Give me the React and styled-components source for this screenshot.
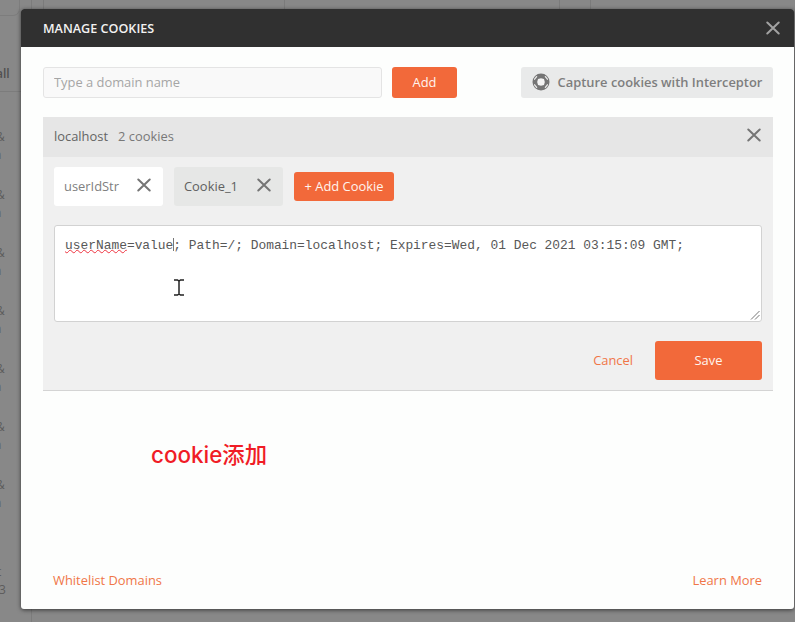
import React from "react";
import styled, { createGlobalStyle } from "styled-components";

const Global = createGlobalStyle`
  *, *::before, *::after { box-sizing: border-box; }
  body {
    margin: 0;
    overflow: hidden;
    background: #888;
    font-family: "Open Sans", "Noto Sans", sans-serif;
    font-size: 12.9px;
    color: #505050;
  }
  button, textarea, input { font: inherit; }
`;

const Screen = styled.div`
  display: grid;
  width: 795px;
  height: 622px;
  overflow: hidden;
  background: #888;
  > * { grid-area: 1 / 1; }
`;

const Backdrop = styled.div`
  display: grid;
  grid-template-columns: 32px 1fr;
  min-height: 0;
`;

const Sidebar = styled.div`
  display: flex;
  flex-direction: column;
  border-right: 1px solid #7c7c7c;
  color: #5c5c5c;
  font-size: 12px;
  line-height: 18px;
`;

const SidebarTop = styled.div`
  width: 20px;
  height: 16px;
  border: 1px solid #7d7d7d;
  border-width: 0 1px 1px 0;
  border-radius: 0 0 7px 0;
`;

const SidebarTab = styled.div`
  height: 76px;
  padding: 49px 0 0;
  border-bottom: 1px solid #7c7c7c;
  font-weight: 600;
  color: #505050;
  span { display: block; margin-left: -4px; }
`;

const HistoryItem = styled.div`
  height: 58px;
  margin-top: ${(p) => p.$gap || 0}px;
  span { display: block; margin-left: ${(p) => p.$shift}px; }
  span + span { margin-left: ${(p) => p.$shift2}px; }
`;

const TabStrip = styled.div`
  display: flex;
  height: 9px;
  margin-left: 11px;
`;

const StripTab = styled.i`
  width: ${(p) => p.$w}px;
  border-left: 1px solid #7b7b7b;
`;

const Modal = styled.section`
  display: flex;
  flex-direction: column;
  width: 773px;
  height: 600px;
  margin: 9px 0 0 21px;
  border-radius: 3px;
  overflow: hidden;
  background: #fdfefd;
  box-shadow: 0 1px 4px rgba(0, 0, 0, 0.6);
`;

const Header = styled.header`
  display: flex;
  justify-content: space-between;
  align-items: center;
  height: 38px;
  flex: none;
  padding: 0 14px 0 22px;
  background: #303030;
  color: #f2f2f2;
  font-size: 12.6px;
  font-weight: 550;
`;

const Body = styled.div`
  flex: 1;
  padding: 20px 21px 0 22px;
`;

const DomainBar = styled.div`
  display: flex;
  height: 30px;
  margin-bottom: 20px;
`;

const DomainInput = styled.input`
  width: 339px;
  height: 31px;
  margin-right: 10px;
  padding: 0 10px 1px;
  border: 1px solid #e4e4e4;
  border-radius: 3px;
  outline: 0;
  background: #f9f9f9;
  color: #505050;
  &::placeholder { color: #a5a5a5; opacity: 1; }
`;

const Button = styled.button`
  display: flex;
  align-items: center;
  justify-content: center;
  width: ${(p) => p.$w}px;
  height: ${(p) => p.$h}px;
  padding: 0 0 2px;
  border: 0;
  border-radius: 3px;
  background: #f2693a;
  color: #fff4ee;
  font-weight: 500;
  white-space: nowrap;
`;

const CaptureButton = styled(Button)`
  gap: 8px;
  margin-left: auto;
  background: #e9eaea;
  color: #7e7e7e;
  font-weight: 600;
`;

const Card = styled.div`
  height: 274px;
  border-bottom: 1px solid #d4d4d4;
  background: #f0f0f0;
`;

const CardHeader = styled.div`
  display: flex;
  align-items: center;
  height: 40px;
  padding: 0 12px 2px 11px;
  gap: 10px;
  background: #e6e6e6;
  color: #646464;
`;

const Count = styled.span`
  flex: 1;
  color: #787878;
`;

const CardBody = styled.div`
  padding: 10px 11px 0;
`;

const Chips = styled.div`
  display: flex;
  align-items: center;
  gap: 11px;
  height: 39px;
`;

const Chip = styled.div`
  display: flex;
  align-items: center;
  justify-content: space-between;
  width: 109px;
  height: 39px;
  padding: 0 12px 2px 10px;
  border-radius: 3px;
  background: ${(p) => (p.$active ? "#fff" : "#e6e7e6")};
  color: ${(p) => (p.$active ? "#808080" : "#606060")};
`;

const Editor = styled.div`
  display: flex;
  height: 97px;
  margin-top: 19px;
  padding: 12px 10px;
  border: 1px solid #d2d2d2;
  border-radius: 3px;
  background: #fff;
  font: 12.9px/15px "Liberation Mono", monospace;
  color: #585858;
  white-space: pre;
`;

const Misspelled = styled.span`
  height: 17px;
  text-decoration: underline wavy #ee3340 1px;
  text-decoration-skip-ink: none;
  text-underline-offset: 0px;
`;

const Caret = styled.span`
  width: 1px;
  height: 13px;
  margin-right: -1px;
  background: #777;
`;

const Grip = styled.svg`
  align-self: flex-end;
  margin: 0 -9px -11px auto;
`;

const Actions = styled.div`
  display: flex;
  align-items: center;
  justify-content: flex-end;
  gap: 22px;
  margin-top: 19px;
`;

const Link = styled.a`
  padding-bottom: ${(p) => p.$lift || 0}px;
  color: #f07648;
`;

const Caption = styled.p`
  margin: 49px 0 0 108px;
  color: #f01c26;
  font: 500 22.4px/30px Inter, "Noto Sans CJK SC", sans-serif;
`;

const Footer = styled.footer`
  display: flex;
  justify-content: space-between;
  padding: 0 32px 20px;
  line-height: 18px;
`;

const Pointer = styled.svg`
  position: absolute;
  left: 173px;
  top: 279px;
`;

const CloseSvg = styled.svg`
  flex: none;
  margin-top: ${(p) => p.$lift || 0}px;
`;

const Close = ({ color = "#757575", lift = 0 }) => (
  <CloseSvg $lift={lift} width="14" height="14" viewBox="0 0 14 14" fill="none" stroke={color} strokeWidth="2" strokeLinecap="round">
    <path d="M1.3 1.5 12.7 12.5M12.7 1.5 1.3 12.5" />
  </CloseSvg>
);

const InterceptorIcon = () => (
  <svg width="18" height="18" viewBox="0 0 18 18">
    <circle cx="9" cy="9" r="8.5" fill="#757575" />
    <g fill="none" stroke="#e9e9e9" strokeWidth="1.3" strokeLinecap="round">
      <path d="M2.6 6.2 4.6 3.600M13.400 3.600l2 2.600M15.400 11.800l-2 2.600M4.600 14.400l-2-2.600" />
    </g>
    <path d="M9 5.200 12 6l.8 3-.8 3-3 .8-3-.8-.8-3 .8-3z" fill="#f4f4f4" />
  </svg>
);

const history = [0, 1, 2, 3, 4, 5, 6];

export default function App() {
  return (
    <>
      <Global />
      <Screen>
        <Backdrop>
          <Sidebar>
            <SidebarTop />
            <SidebarTab><span>all</span></SidebarTab>
            {history.map((n) => (
              <HistoryItem key={n} $gap={n === 0 ? 36 : 0} $shift={-4} $shift2={-6}>
                <span>&amp;</span>
                <span>n</span>
              </HistoryItem>
            ))}
            <HistoryItem $gap={29} $shift={-3} $shift2={-1}>
              <span>t</span>
              <span>3</span>
            </HistoryItem>
          </Sidebar>
          <TabStrip>
            <StripTab $w={241} />
            <StripTab $w={275} />
            <StripTab $w={31} />
            <StripTab $w={1} />
          </TabStrip>
        </Backdrop>
        <Modal>
          <Header>
            MANAGE COOKIES
            <Close color="#a2a2a2" />
          </Header>
          <Body>
            <DomainBar>
              <DomainInput placeholder="Type a domain name" />
              <Button $w={65} $h={31}>Add</Button>
              <CaptureButton $w={252} $h={31}>
                <InterceptorIcon />
                Capture cookies with Interceptor
              </CaptureButton>
            </DomainBar>
            <Card>
              <CardHeader>
                localhost
                <Count>2 cookies</Count>
                <Close lift={-2} />
              </CardHeader>
              <CardBody>
                <Chips>
                  <Chip $active>userIdStr<Close lift={-2} /></Chip>
                  <Chip>Cookie_1<Close lift={-2} /></Chip>
                  <Button $w={100} $h={29}>+ Add Cookie</Button>
                </Chips>
                <Editor>
                  <Misspelled>userName</Misspelled>
                  <span>=value</span>
                  <Caret />
                  <span>; Path=/; Domain=localhost; Expires=Wed, 01 Dec 2021 03:15:09 GMT;</span>
                  <Grip width="10" height="10" viewBox="0 0 10 10" stroke="#777" strokeWidth="1">
                    <path d="M1 9.5 9.5 1M5 9.5 9.5 5" />
                  </Grip>
                </Editor>
                <Actions>
                  <Link $lift={2}>Cancel</Link>
                  <Button $w={107} $h={39}>Save</Button>
                </Actions>
              </CardBody>
            </Card>
            <Caption>cookie添加</Caption>
          </Body>
          <Footer>
            <Link>Whitelist Domains</Link>
            <Link>Learn More</Link>
          </Footer>
        </Modal>
      </Screen>
      <Pointer width="12" height="17" viewBox="0 0 12 17" fill="none" stroke="#222" strokeWidth="1.5">
        <path d="M1 1h3.5L6 2l1.5-1H11M6 2v13M1 16h3.5L6 15l1.5 1H11" />
      </Pointer>
    </>
  );
}
